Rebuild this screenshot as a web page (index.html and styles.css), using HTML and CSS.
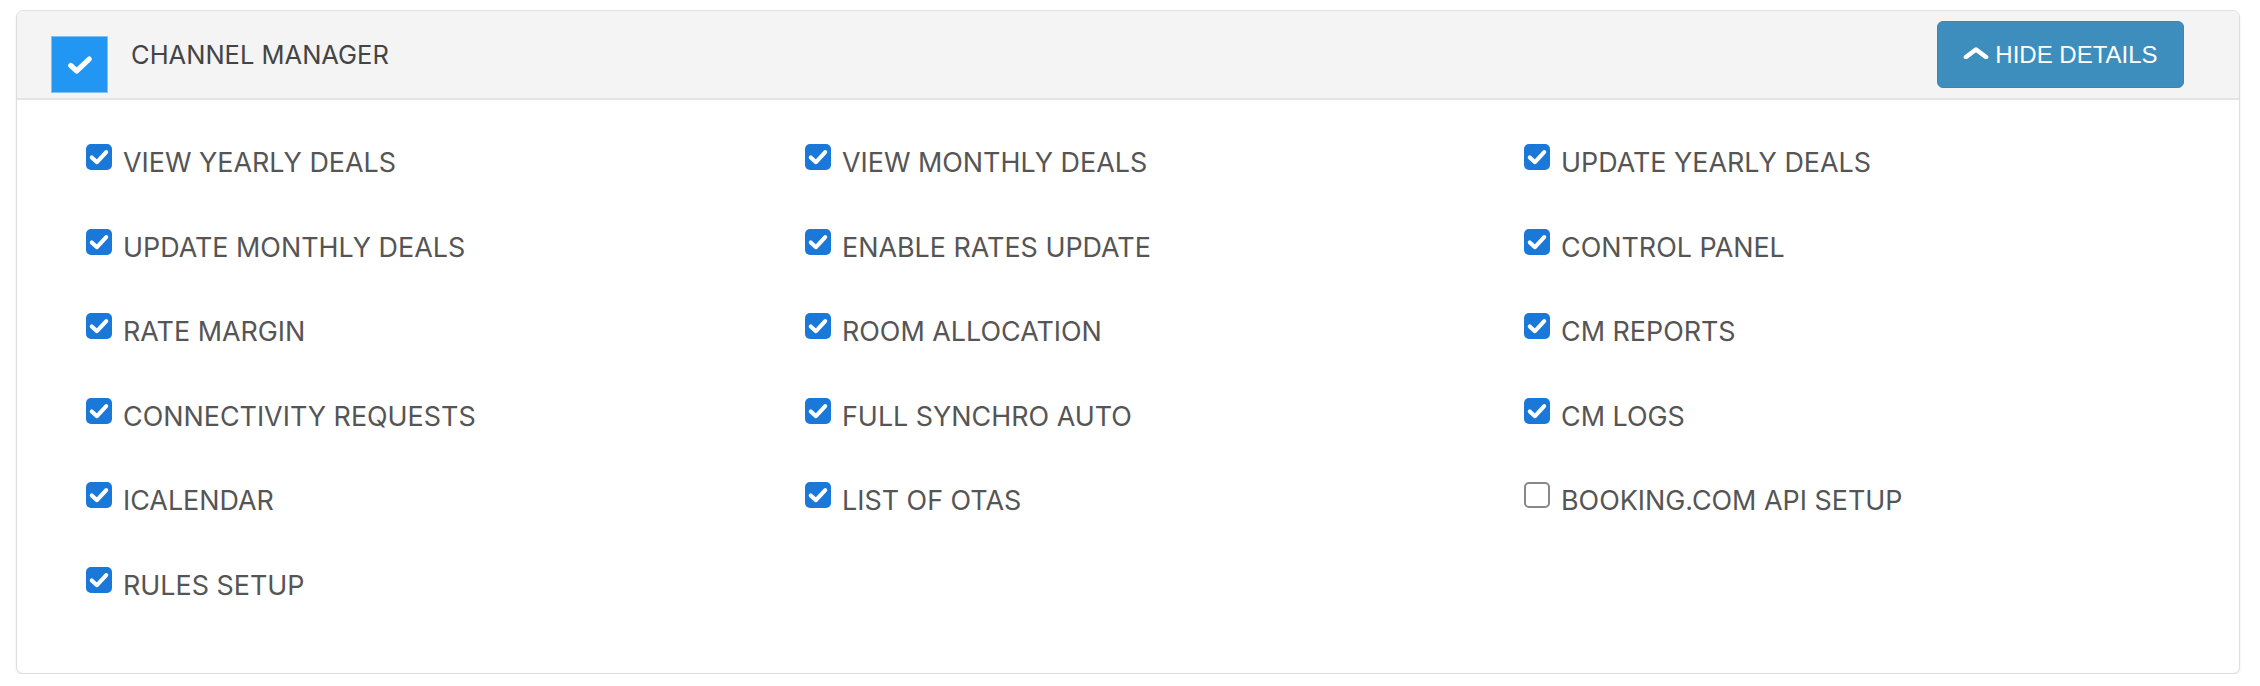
FILE: index.html
```html
<!DOCTYPE html>
<html>
<head>
<meta charset="utf-8">
<link rel="stylesheet" href="styles.css">
</head>
<body>
<div class="card">
  <div class="card-header">
    <span class="master-box">
      <svg viewBox="0 0 24 20" width="26" height="22"><path d="M3.5 10.5 L9 15.5 L20.5 4.5" fill="none" stroke="#fff" stroke-width="4.8" stroke-linecap="round" stroke-linejoin="round"/></svg>
    </span>
    <span class="title">CHANNEL MANAGER</span>
    <button class="btn-hide">
      <svg viewBox="0 0 26 12" width="26" height="12"><path d="M3 10 L13 2.5 L23 10" fill="none" stroke="#fff" stroke-width="4.6" stroke-linecap="round" stroke-linejoin="round"/></svg>
      <span>HIDE DETAILS</span>
    </button>
  </div>
  <div class="card-body">
    <label class="item"><span class="cb on"><svg viewBox="0 0 18 18"><path d="M4 9.3 L7.6 12.6 L14 5.6" fill="none" stroke="#fff" stroke-width="2.8" stroke-linecap="round" stroke-linejoin="round"/></svg></span>VIEW YEARLY DEALS</label>
    <label class="item"><span class="cb on"><svg viewBox="0 0 18 18"><path d="M4 9.3 L7.6 12.6 L14 5.6" fill="none" stroke="#fff" stroke-width="2.8" stroke-linecap="round" stroke-linejoin="round"/></svg></span>VIEW MONTHLY DEALS</label>
    <label class="item"><span class="cb on"><svg viewBox="0 0 18 18"><path d="M4 9.3 L7.6 12.6 L14 5.6" fill="none" stroke="#fff" stroke-width="2.8" stroke-linecap="round" stroke-linejoin="round"/></svg></span>UPDATE YEARLY DEALS</label>

    <label class="item"><span class="cb on"><svg viewBox="0 0 18 18"><path d="M4 9.3 L7.6 12.6 L14 5.6" fill="none" stroke="#fff" stroke-width="2.8" stroke-linecap="round" stroke-linejoin="round"/></svg></span>UPDATE MONTHLY DEALS</label>
    <label class="item"><span class="cb on"><svg viewBox="0 0 18 18"><path d="M4 9.3 L7.6 12.6 L14 5.6" fill="none" stroke="#fff" stroke-width="2.8" stroke-linecap="round" stroke-linejoin="round"/></svg></span>ENABLE RATES UPDATE</label>
    <label class="item"><span class="cb on"><svg viewBox="0 0 18 18"><path d="M4 9.3 L7.6 12.6 L14 5.6" fill="none" stroke="#fff" stroke-width="2.8" stroke-linecap="round" stroke-linejoin="round"/></svg></span>CONTROL PANEL</label>

    <label class="item"><span class="cb on"><svg viewBox="0 0 18 18"><path d="M4 9.3 L7.6 12.6 L14 5.6" fill="none" stroke="#fff" stroke-width="2.8" stroke-linecap="round" stroke-linejoin="round"/></svg></span>RATE MARGIN</label>
    <label class="item"><span class="cb on"><svg viewBox="0 0 18 18"><path d="M4 9.3 L7.6 12.6 L14 5.6" fill="none" stroke="#fff" stroke-width="2.8" stroke-linecap="round" stroke-linejoin="round"/></svg></span>ROOM ALLOCATION</label>
    <label class="item"><span class="cb on"><svg viewBox="0 0 18 18"><path d="M4 9.3 L7.6 12.6 L14 5.6" fill="none" stroke="#fff" stroke-width="2.8" stroke-linecap="round" stroke-linejoin="round"/></svg></span>CM REPORTS</label>

    <label class="item"><span class="cb on"><svg viewBox="0 0 18 18"><path d="M4 9.3 L7.6 12.6 L14 5.6" fill="none" stroke="#fff" stroke-width="2.8" stroke-linecap="round" stroke-linejoin="round"/></svg></span>CONNECTIVITY REQUESTS</label>
    <label class="item"><span class="cb on"><svg viewBox="0 0 18 18"><path d="M4 9.3 L7.6 12.6 L14 5.6" fill="none" stroke="#fff" stroke-width="2.8" stroke-linecap="round" stroke-linejoin="round"/></svg></span>FULL SYNCHRO AUTO</label>
    <label class="item"><span class="cb on"><svg viewBox="0 0 18 18"><path d="M4 9.3 L7.6 12.6 L14 5.6" fill="none" stroke="#fff" stroke-width="2.8" stroke-linecap="round" stroke-linejoin="round"/></svg></span>CM LOGS</label>

    <label class="item"><span class="cb on"><svg viewBox="0 0 18 18"><path d="M4 9.3 L7.6 12.6 L14 5.6" fill="none" stroke="#fff" stroke-width="2.8" stroke-linecap="round" stroke-linejoin="round"/></svg></span>ICALENDAR</label>
    <label class="item"><span class="cb on"><svg viewBox="0 0 18 18"><path d="M4 9.3 L7.6 12.6 L14 5.6" fill="none" stroke="#fff" stroke-width="2.8" stroke-linecap="round" stroke-linejoin="round"/></svg></span>LIST OF OTAS</label>
    <label class="item"><span class="cb off"></span>BOOKING.COM API SETUP</label>

    <label class="item"><span class="cb on"><svg viewBox="0 0 18 18"><path d="M4 9.3 L7.6 12.6 L14 5.6" fill="none" stroke="#fff" stroke-width="2.8" stroke-linecap="round" stroke-linejoin="round"/></svg></span>RULES SETUP</label>
  </div>
</div>
</body>
</html>
```
FILE: styles.css
```css
* { box-sizing: border-box; }
html, body { margin: 0; background: #fff; }
body {
  padding: 10px 20px 0 16px;
  font-family: Inter, "Open Sans", sans-serif;
}
.card {
  width: 2224px;
  height: 664px;
  border: 1px solid #dedede;
  border-radius: 7px;
  box-shadow: 0 2px 3px rgba(0,0,0,0.08);
  overflow: hidden;
  background: #fff;
}
.card-header {
  height: 89px;
  background: #f4f4f4;
  border-bottom: 2px solid #e4e4e4;
  display: flex;
  align-items: center;
  padding: 0 55px 0 34px;
}
.master-box {
  width: 57px;
  height: 57px;
  background: #2196f3;
  border: 1px solid #7fc0f5;
  display: flex;
  align-items: center;
  justify-content: center;
  align-self: flex-end;
  margin-bottom: 5px;
}
.title {
  margin-left: 23px;
  font-size: 25.5px;
  color: #444;
  flex: 1;
}
.btn-hide {
  width: 247px;
  height: 67px;
  background: #3d8ebd;
  border: 1px solid #3a87b5;
  border-radius: 6px;
  color: #fff;
  display: flex;
  align-items: center;
  justify-content: center;
  gap: 6px;
  padding: 0;
  font-family: "Liberation Sans", Arial, sans-serif;
  font-size: 24px;
}
.btn-hide svg { margin-top: -3px; }
.card-body {
  display: grid;
  grid-template-columns: 719px 719px 1fr;
  grid-auto-rows: 84.5px;
  padding: 49px 0 0 69px;
}
.item {
  display: flex;
  align-items: flex-start;
  font-size: 26.9px;
  color: #555;
  line-height: 26px;
}
.item .cb {
  width: 26px;
  height: 26px;
  border-radius: 5px;
  margin-right: 11px;
  flex: none;
  margin-top: -5px;
}
.cb.on { background: #1a78d8; }
.cb.on svg { width: 26px; height: 26px; display: block; }
.cb.off { border: 2px solid #888; background: #fff; }
```
